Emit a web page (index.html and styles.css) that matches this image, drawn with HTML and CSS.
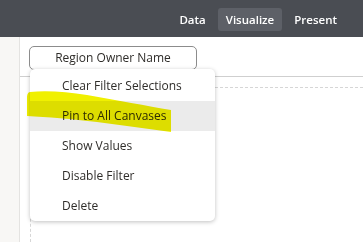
FILE: index.html
```html
<!DOCTYPE html>
<html lang="en">
<head>
    <meta charset="UTF-8">
    <title>Visualize</title>
    <link rel="stylesheet" href="styles.css">
</head>
<body>
    <header class="topbar">
        <nav class="tabs">
            <span class="tab">Data</span>
            <span class="tab active">Visualize</span>
            <span class="tab">Present</span>
        </nav>
    </header>

    <div class="workspace">
        <div class="side-panel"></div>
        <div class="canvas">
            <div class="filter-bar">
                <button class="filter-pill">Region Owner Name</button>
            </div>
            <div class="drop-area"></div>

            <ul class="context-menu">
                <li>Clear Filter Selections</li>
                <li class="hover">Pin to All Canvases</li>
                <li>Show Values</li>
                <li>Disable Filter</li>
                <li>Delete</li>
            </ul>

            <svg class="marker" width="150" height="45" viewBox="0 0 150 45">
                <path d="M3 3 C20 1 40 3 60 6 C90 11 120 17 144 21 L144 43 C120 40 95 36 70 33 C45 30 20 28 0 27 L0 8 C0 6 1 3 3 3 Z" />
            </svg>
        </div>
    </div>
</body>
</html>
```

FILE: styles.css
```css
body {
    margin: 0;
    font-family: 'Open Sans', 'Noto Sans', sans-serif;
    background-color: #ffffff;
    color: #2f2d2a;
    overflow: hidden;
}

.topbar {
    height: 37px;
    background-color: #4a4d53;
    display: flex;
    justify-content: flex-end;
    align-items: center;
}

.tabs {
    display: flex;
    gap: 4px;
    margin-right: 18px;
    margin-top: 1px;
}

.tab {
    color: #ffffff;
    font-size: 11.5px;
    font-weight: 600;
    line-height: 15px;
    padding: 4px 8px;
    border-radius: 3px;
}

.tab.active {
    background-color: #5d6067;
}

.workspace {
    display: flex;
    height: 205px;
}

.side-panel {
    width: 19px;
    background-color: #f8f7f5;
    border-right: 1px solid #e4e3e1;
}

.canvas {
    flex: 1;
    position: relative;
    display: flex;
    flex-direction: column;
}

.filter-bar {
    height: 40px;
    padding: 8px 0 0 9px;
    box-sizing: border-box;
    border-bottom: 1px solid #cfcfcf;
}

.filter-pill {
    width: 168px;
    height: 24px;
    font-family: inherit;
    font-size: 12px;
    color: #2f2d2a;
    background-color: #ffffff;
    border: 1px solid #8c8c8c;
    border-radius: 5px;
    padding: 0;
}

.drop-area {
    flex: 1;
    margin: 10px 0 0 10px;
    border-top: 1px dashed #d6d6d6;
    border-left: 1px dashed #d6d6d6;
}

.context-menu {
    position: absolute;
    left: 10px;
    top: 32px;
    width: 185px;
    margin: 0;
    padding: 2px 0 0;
    list-style: none;
    background-color: #ffffff;
    border-radius: 5px;
    box-shadow: 0 1px 4px rgba(0, 0, 0, 0.25);
}

.context-menu li {
    height: 30px;
    line-height: 30px;
    padding-left: 32px;
    font-size: 12px;
}

.context-menu li.hover {
    background-color: #ebebeb;
}

.marker {
    position: absolute;
    left: 7px;
    top: 52px;
    mix-blend-mode: multiply;
}

.marker path {
    fill: #f0f000;
}
```
